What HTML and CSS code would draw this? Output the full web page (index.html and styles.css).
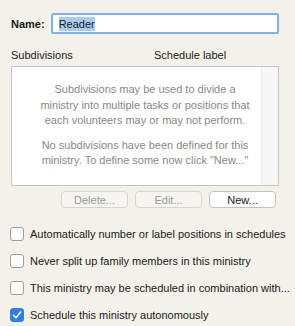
FILE: index.html
```html
<!DOCTYPE html>
<html>
<head>
<meta charset="utf-8">
<link rel="stylesheet" href="styles.css">
</head>
<body>
<div class="panel">
  <div class="name-row">
    <label class="name-label">Name:</label>
    <div class="name-input"><span class="sel">Reader</span></div>
  </div>
  <div class="list-head">
    <span class="col1">Subdivisions</span>
    <span class="col2">Schedule label</span>
  </div>
  <div class="list">
    <div class="list-body">
      <p>Subdivisions may be used to divide a<br>ministry into multiple tasks or positions that<br>each volunteers may or may not perform.</p>
      <p>No subdivisions have been defined for this<br>ministry. To define some now click "New..."</p>
    </div>
    <div class="scroll"></div>
  </div>
  <div class="buttons">
    <button class="btn disabled">Delete...</button>
    <button class="btn disabled">Edit...</button>
    <button class="btn">New...</button>
  </div>
  <div class="checks">
    <div class="check"><span class="box"></span><span>Automatically number or label positions in schedules</span></div>
    <div class="check"><span class="box"></span><span>Never split up family members in this ministry</span></div>
    <div class="check"><span class="box"></span><span>This ministry may be scheduled in combination with...</span></div>
    <div class="check"><span class="box on"><svg width="14" height="14" viewBox="0 0 14 14"><path d="M3.5 7.3 L6 9.8 L10.6 4" fill="none" stroke="#fff" stroke-width="1.6" stroke-linecap="round" stroke-linejoin="round"/></svg></span><span>Schedule this ministry autonomously</span></div>
  </div>
</div>
</body>
</html>
```
FILE: styles.css
```css
html, body {
  margin: 0;
  padding: 0;
  background: #f4f1ea;
}
body {
  font-family: "Liberation Sans", Arial, sans-serif;
  font-size: 11px;
  color: #1a1a1a;
  width: 295px;
  height: 326px;
  overflow: hidden;
}
.panel {
  padding: 13px 16px 0 10px;
}
.name-row {
  display: flex;
  align-items: center;
  gap: 6px;
  height: 21px;
}
.name-label {
  font-weight: bold;
  padding-left: 1px;
}
.name-input {
  flex: 1;
  height: 17px;
  border: 2px solid #7db3ea;
  border-radius: 2px;
  background: #fff;
  display: flex;
  align-items: center;
  padding-left: 6px;
}
.sel {
  background: #a8cdf3;
  line-height: 14px;
}
.list-head {
  display: flex;
  margin-top: 12px;
  padding-left: 1px;
  height: 18px;
  align-items: center;
}
.col1 { width: 143px; }
.list {
  margin-top: 2px;
  margin-left: 1px;
  height: 118px;
  border: 1px solid #c8c5bd;
  background: #fff;
  display: flex;
  position: relative;
}
.list-body {
  padding-top: 15px;
  text-align: center;
  color: #888;
  position: absolute;
  left: 0;
  right: 0;
}
.list-body p {
  margin: 0 0 9px;
  line-height: 15.5px;
}
.scroll {
  margin-left: auto;
  width: 16px;
  background: #f7f7f7;
  border-left: 1px solid #eeeeee;
}
.buttons {
  display: flex;
  justify-content: flex-end;
  gap: 7px;
  margin-top: 5px;
  padding-right: 3px;
}
.btn {
  width: 67px;
  height: 17px;
  border: 1px solid #c4c1b9;
  border-radius: 4px;
  background: #fff;
  font-family: inherit;
  font-size: 11px;
  color: #1a1a1a;
  padding: 0;
}
.btn.disabled {
  background: #f7f5f1;
  color: #9a9a9a;
  border-color: #d8d5ce;
}
.checks {
  margin-top: 19px;
  display: flex;
  flex-direction: column;
  gap: 13px;
}
.check {
  display: flex;
  align-items: center;
  gap: 6px;
  height: 14px;
  white-space: nowrap;
}
.box {
  width: 12px;
  height: 12px;
  border: 1px solid #a09d97;
  border-radius: 3px;
  background: #fff;
  flex: none;
  display: flex;
  align-items: center;
  justify-content: center;
}
.box.on {
  background: #2f7fe6;
  border-color: #2f7fe6;
}
.box.on svg { flex: none; }
```
